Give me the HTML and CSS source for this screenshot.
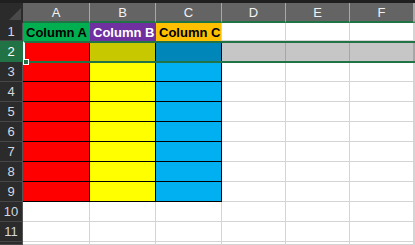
FILE: index.html
```html
<!DOCTYPE html>
<html lang="en">
<head>
  <meta charset="UTF-8">
  <title>Sheet</title>
  <link rel="stylesheet" href="styles.css">
</head>
<body>
  <div class="topbar"></div>
  <div class="sheet">
    <div class="corner">
      <svg class="tri" width="12" height="12" viewBox="0 0 12 12"><polygon points="12,0 12,12 0,12" fill="#4a4a4a"/></svg>
    </div>
    <div class="col-head">A</div>
    <div class="col-head">B</div>
    <div class="col-head">C</div>
    <div class="col-head">D</div>
    <div class="col-head">E</div>
    <div class="col-head">F</div>
    <div class="col-head"></div>

    <div class="row-head">1</div>
    <div class="cell title green">Column A</div>
    <div class="cell title purple">Column B</div>
    <div class="cell title orange">Column C</div>
    <div class="cell"></div>
    <div class="cell"></div>
    <div class="cell"></div>
    <div class="cell"></div>

    <div class="row-head active">2</div>
    <div class="cell boxed red"></div>
    <div class="cell boxed yellow-sel"></div>
    <div class="cell boxed blue-sel"></div>
    <div class="cell sel"></div>
    <div class="cell sel"></div>
    <div class="cell sel"></div>
    <div class="cell sel"></div>

    <div class="row-head">3</div>
    <div class="cell boxed red"></div><div class="cell boxed yellow"></div><div class="cell boxed blue"></div>
    <div class="cell"></div><div class="cell"></div><div class="cell"></div><div class="cell"></div>

    <div class="row-head">4</div>
    <div class="cell boxed red"></div><div class="cell boxed yellow"></div><div class="cell boxed blue"></div>
    <div class="cell"></div><div class="cell"></div><div class="cell"></div><div class="cell"></div>

    <div class="row-head">5</div>
    <div class="cell boxed red"></div><div class="cell boxed yellow"></div><div class="cell boxed blue"></div>
    <div class="cell"></div><div class="cell"></div><div class="cell"></div><div class="cell"></div>

    <div class="row-head">6</div>
    <div class="cell boxed red"></div><div class="cell boxed yellow"></div><div class="cell boxed blue"></div>
    <div class="cell"></div><div class="cell"></div><div class="cell"></div><div class="cell"></div>

    <div class="row-head">7</div>
    <div class="cell boxed red"></div><div class="cell boxed yellow"></div><div class="cell boxed blue"></div>
    <div class="cell"></div><div class="cell"></div><div class="cell"></div><div class="cell"></div>

    <div class="row-head">8</div>
    <div class="cell boxed red"></div><div class="cell boxed yellow"></div><div class="cell boxed blue"></div>
    <div class="cell"></div><div class="cell"></div><div class="cell"></div><div class="cell"></div>

    <div class="row-head">9</div>
    <div class="cell boxed red"></div><div class="cell boxed yellow"></div><div class="cell boxed blue"></div>
    <div class="cell"></div><div class="cell"></div><div class="cell"></div><div class="cell"></div>

    <div class="row-head">10</div>
    <div class="cell"></div><div class="cell"></div><div class="cell"></div>
    <div class="cell"></div><div class="cell"></div><div class="cell"></div><div class="cell"></div>

    <div class="row-head">11</div>
    <div class="cell"></div><div class="cell"></div><div class="cell"></div>
    <div class="cell"></div><div class="cell"></div><div class="cell"></div><div class="cell"></div>

    <!-- row 12, only its top edge is in view -->
    <div class="row-head"></div>
    <div class="cell"></div><div class="cell"></div><div class="cell"></div>
    <div class="cell"></div><div class="cell"></div><div class="cell"></div><div class="cell"></div>

    <!-- row 2 selection overlay -->
    <div class="selection"></div>
    <div class="handle"></div>
  </div>
</body>
</html>
```

FILE: styles.css
```css
body {
  margin: 0;
  width: 415px;
  height: 245px;
  overflow: hidden;
  background-color: #ffffff;
  font-family: "Liberation Sans", Arial, sans-serif;
}
.topbar {
  height: 3px;
  background-color: #1f1f1f;
}
.sheet {
  position: relative;
  display: grid;
  grid-template-columns: 23px 67px 66px 66px 64px 64px 64px 1px;
  grid-template-rows: 20px 18px 21px repeat(9, 20px) 3px;
  overflow: hidden;
}
.corner {
  position: relative;
  background-color: #2b2b2b;
  border-bottom: 2px solid #2b2b2b;
}
.tri {
  position: absolute;
  right: 2px;
  bottom: 1px;
}
.col-head {
  display: flex;
  align-items: center;
  justify-content: center;
  box-sizing: border-box;
  background-color: #646464;
  color: #f2f2f2;
  font-size: 13px;
  border-right: 1px solid #a8a8a8;
  border-bottom: 2px solid #217346;
  padding-top: 1px;
}
.row-head {
  display: flex;
  align-items: center;
  justify-content: center;
  box-sizing: border-box;
  background-color: #2b2b2b;
  color: #d4d8e0;
  font-size: 13px;
  border-bottom: 1px solid #474747;
  border-right: 1px solid #555555;
}
.row-head.active {
  background-color: #217346;
  color: #ffffff;
  border-right-color: #217346;
  border-bottom-color: #217346;
}
.cell {
  box-sizing: border-box;
  border-right: 1px solid #d4d4d4;
  border-bottom: 1px solid #d4d4d4;
}
.cell.sel {
  background-color: #c6c6c6;
  border-right-color: #a6a6a6;
  border-bottom-color: #a6a6a6;
}
.title {
  display: flex;
  align-items: center;
  padding: 1px 0 0 3px;
  font-weight: bold;
  font-size: 13px;
  white-space: nowrap;
  overflow: hidden;
  border-right: none;
}
.boxed {
  border-right-color: #000000;
  border-bottom-color: #000000;
}
.green { background-color: #00b050; color: #000000; border-bottom-color: #00b050; }
.purple { background-color: #7030a0; color: #ffffff; border-bottom-color: #7030a0; }
.orange { background-color: #ffc000; color: #000000; border-bottom-color: #ffc000; border-right: 1px solid #d4d4d4; }
.red { background-color: #ff0000; }
.yellow { background-color: #ffff00; }
.blue { background-color: #00b0f0; }
.yellow-sel { background-color: #c8c800; }
.blue-sel { background-color: #0086b8; }
.selection {
  position: absolute;
  top: 38px;
  left: 23px;
  right: -10px;
  height: 22px;
  box-sizing: border-box;
  border: 2px solid #217346;
  border-left-color: #ffffff;
}
.handle {
  position: absolute;
  top: 56px;
  left: 23px;
  width: 6px;
  height: 6px;
  box-sizing: border-box;
  background-color: #217346;
  border: 1px solid #ffffff;
}
```
